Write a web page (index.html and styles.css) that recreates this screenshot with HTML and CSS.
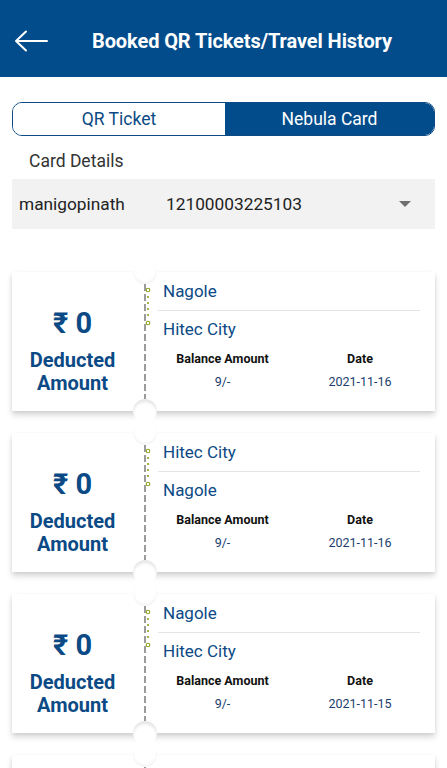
FILE: index.html
```html
<!DOCTYPE html>
<html>
<head>
<meta charset="utf-8">
<link rel="stylesheet" href="styles.css">
</head>
<body>
<header class="topbar">
  <svg class="back" width="34" height="22" viewBox="0 0 34 22"><path d="M2 11 H33 M12 1.5 L2 11 L12 20.5" fill="none" stroke="#fff" stroke-width="2" stroke-linecap="round" stroke-linejoin="round"/></svg>
  <h1 class="title">Booked QR Tickets/Travel History</h1>
</header>
<main class="content">
  <div class="segment">
    <div class="seg-item">QR Ticket</div>
    <div class="seg-item active">Nebula Card</div>
  </div>
  <div class="label">Card Details</div>
  <div class="select">
    <span class="sel-name">manigopinath</span>
    <span class="sel-num">12100003225103</span>
    <span class="caret"></span>
  </div>

  <div class="tickets">
    <div class="ticket">
      <div class="t-left">
        <div class="amount">₹ 0</div>
        <div class="amount-label">Deducted<br>Amount</div>
      </div>
      <div class="t-sep">
        <span class="notch notch-top"></span>
        <span class="dash"></span>
        <svg class="route" width="6" height="40" viewBox="0 0 6 40"><circle cx="3" cy="3" r="1.8" fill="none" stroke="#8ea21e" stroke-width="1.1"/><circle cx="3" cy="10" r="1.1" fill="#8ea21e"/><circle cx="3" cy="16" r="1.1" fill="#8ea21e"/><circle cx="3" cy="22" r="1.1" fill="#8ea21e"/><circle cx="3" cy="28" r="1.1" fill="#8ea21e"/><circle cx="3" cy="36" r="1.8" fill="none" stroke="#8ea21e" stroke-width="1.1"/></svg>
        <span class="notch notch-bottom"></span>
      </div>
      <div class="t-right">
        <div class="stop stop-from">Nagole</div>
        <div class="stop">Hitec City</div>
        <div class="info">
          <div class="info-head">Balance Amount</div>
          <div class="info-head">Date</div>
          <div class="info-val">9/-</div>
          <div class="info-val">2021-11-16</div>
        </div>
      </div>
    </div>

    <div class="ticket">
      <div class="t-left">
        <div class="amount">₹ 0</div>
        <div class="amount-label">Deducted<br>Amount</div>
      </div>
      <div class="t-sep">
        <span class="notch notch-top"></span>
        <span class="dash"></span>
        <svg class="route" width="6" height="40" viewBox="0 0 6 40"><circle cx="3" cy="3" r="1.8" fill="none" stroke="#8ea21e" stroke-width="1.1"/><circle cx="3" cy="10" r="1.1" fill="#8ea21e"/><circle cx="3" cy="16" r="1.1" fill="#8ea21e"/><circle cx="3" cy="22" r="1.1" fill="#8ea21e"/><circle cx="3" cy="28" r="1.1" fill="#8ea21e"/><circle cx="3" cy="36" r="1.8" fill="none" stroke="#8ea21e" stroke-width="1.1"/></svg>
        <span class="notch notch-bottom"></span>
      </div>
      <div class="t-right">
        <div class="stop stop-from">Hitec City</div>
        <div class="stop">Nagole</div>
        <div class="info">
          <div class="info-head">Balance Amount</div>
          <div class="info-head">Date</div>
          <div class="info-val">9/-</div>
          <div class="info-val">2021-11-16</div>
        </div>
      </div>
    </div>

    <div class="ticket">
      <div class="t-left">
        <div class="amount">₹ 0</div>
        <div class="amount-label">Deducted<br>Amount</div>
      </div>
      <div class="t-sep">
        <span class="notch notch-top"></span>
        <span class="dash"></span>
        <svg class="route" width="6" height="40" viewBox="0 0 6 40"><circle cx="3" cy="3" r="1.8" fill="none" stroke="#8ea21e" stroke-width="1.1"/><circle cx="3" cy="10" r="1.1" fill="#8ea21e"/><circle cx="3" cy="16" r="1.1" fill="#8ea21e"/><circle cx="3" cy="22" r="1.1" fill="#8ea21e"/><circle cx="3" cy="28" r="1.1" fill="#8ea21e"/><circle cx="3" cy="36" r="1.8" fill="none" stroke="#8ea21e" stroke-width="1.1"/></svg>
        <span class="notch notch-bottom"></span>
      </div>
      <div class="t-right">
        <div class="stop stop-from">Nagole</div>
        <div class="stop">Hitec City</div>
        <div class="info">
          <div class="info-head">Balance Amount</div>
          <div class="info-head">Date</div>
          <div class="info-val">9/-</div>
          <div class="info-val">2021-11-15</div>
        </div>
      </div>
    </div>

    <div class="ticket">
      <div class="t-left">
        <div class="amount">₹ 0</div>
        <div class="amount-label">Deducted<br>Amount</div>
      </div>
      <div class="t-sep">
        <span class="notch notch-top"></span>
        <span class="dash"></span>
        <svg class="route" width="6" height="40" viewBox="0 0 6 40"><circle cx="3" cy="3" r="1.8" fill="none" stroke="#8ea21e" stroke-width="1.1"/><circle cx="3" cy="10" r="1.1" fill="#8ea21e"/><circle cx="3" cy="16" r="1.1" fill="#8ea21e"/><circle cx="3" cy="22" r="1.1" fill="#8ea21e"/><circle cx="3" cy="28" r="1.1" fill="#8ea21e"/><circle cx="3" cy="36" r="1.8" fill="none" stroke="#8ea21e" stroke-width="1.1"/></svg>
        <span class="notch notch-bottom"></span>
      </div>
      <div class="t-right">
        <div class="stop stop-from">Hitec City</div>
        <div class="stop">Nagole</div>
        <div class="info">
          <div class="info-head">Balance Amount</div>
          <div class="info-head">Date</div>
          <div class="info-val">9/-</div>
          <div class="info-val">2021-11-15</div>
        </div>
      </div>
    </div>
  </div>
</main>
</body>
</html>
```
FILE: styles.css
```css
* { box-sizing: border-box; }
html, body { margin: 0; padding: 0; background: #fff; }
body { font-family: Roboto, "Noto Sans", "DejaVu Sans", sans-serif; color: #222; }

.topbar {
  height: 77px;
  background: #024c8b;
  display: flex;
  align-items: center;
  padding-left: 14px;
  padding-top: 4px;
}
.back { display: block; }
.title {
  margin: 0 0 0 44px;
  color: #fff;
  font-size: 20px;
  font-weight: 700;
  letter-spacing: -0.1px;
}

.content { padding: 0 12px; }

.segment {
  margin-top: 25px;
  height: 34px;
  display: grid;
  grid-template-columns: 212px 1fr;
  border: 1px solid #0b4a85;
  border-radius: 10px;
  overflow: hidden;
}
.seg-item {
  display: flex;
  align-items: center;
  justify-content: center;
  font-size: 17.5px;
  color: #0b4a85;
  background: #fff;
}
.seg-item.active { background: #024c8b; color: #fff; }

.label {
  padding: 15px 0 0 17px;
  height: 43px;
  font-size: 17.5px;
  line-height: 21px;
  color: #333;
}

.select {
  height: 50px;
  background: #f2f2f2;
  display: flex;
  align-items: center;
  padding-left: 7px;
  font-size: 17.3px;
  color: #222;
}
.sel-name { width: 147px; }
.sel-num { flex: 1; }
.caret {
  width: 0; height: 0;
  border-left: 6px solid transparent;
  border-right: 6px solid transparent;
  border-top: 6px solid #707070;
  margin-right: 24px;
}

.tickets {
  margin-top: 43px;
  display: flex;
  flex-direction: column;
  gap: 22px;
  padding-bottom: 20px;
}
.ticket {
  height: 139px;
  background: #fff;
  display: flex;
  box-shadow: 0 4px 6px rgba(0,0,0,0.16), 0 1px 3px rgba(0,0,0,0.06);
}
.t-left {
  width: 121px;
  padding-top: 35px;
  text-align: center;
  color: #0b4a85;
  font-weight: 700;
}
.amount { font-size: 29px; line-height: 32px; }
.amount-label { margin-top: 10px; font-size: 20px; line-height: 23px; }

.t-sep {
  width: 24px;
  position: relative;
  display: flex;
  justify-content: center;
  padding: 12px 0;
}
.dash {
  width: 2px;
  background: repeating-linear-gradient(to bottom, #9a9a9a 0 7px, transparent 7px 10px);
}
.notch {
  position: absolute;
  left: 0;
  width: 24px;
  height: 24px;
  border-radius: 50%;
  background: #fff;
}
.notch-top { top: -12px; box-shadow: inset 0 -2px 3px rgba(0,0,0,0.05); }
.notch-bottom { bottom: -12px; box-shadow: inset 0 3px 3px rgba(0,0,0,0.10); }
.route { position: absolute; left: 12px; top: 15px; }

.t-right {
  flex: 1;
  padding: 0 2px 0 1px;
}
.stop {
  font-size: 17px;
  line-height: 22px;
  color: #0b4a85;
  padding: 8px 0 0 5px;
}
.stop-from {
  height: 39px;
  margin-right: 13px;
  border-bottom: 1px solid #e4e4e4;
}
.stop + .stop { padding-top: 7px; }
.info {
  margin-top: 11px;
  display: grid;
  grid-template-columns: 129px 1fr;
  row-gap: 8px;
  text-align: center;
  font-size: 12.5px;
  line-height: 15px;
}
.info-head { font-weight: 700; color: #111; }
.info-val { color: #1a3d6e; }
```
